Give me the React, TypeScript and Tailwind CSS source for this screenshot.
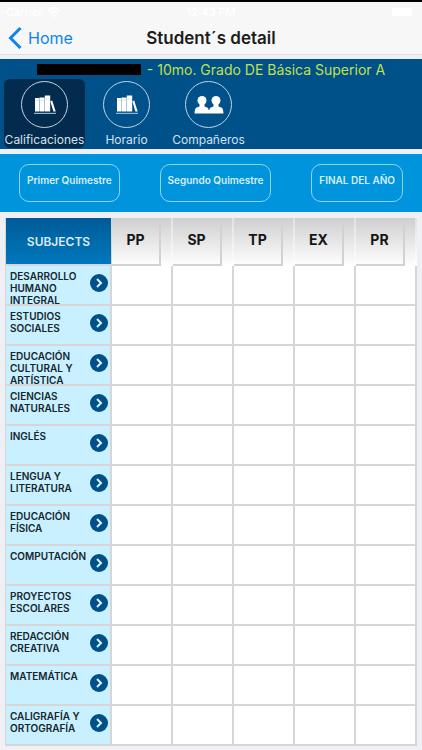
import { useState } from "react";
import type { ReactNode } from "react";
import clsx from "clsx";

const COLUMNS = ["PP", "SP", "TP", "EX", "PR"];

const TERMS = ["Primer Quimestre", "Segundo Quimestre", "FINAL DEL AÑO"];

const SUBJECTS = [
  "DESARROLLO HUMANO INTEGRAL",
  "ESTUDIOS SOCIALES",
  "EDUCACIÓN CULTURAL Y ARTÍSTICA",
  "CIENCIAS NATURALES",
  "INGLÉS",
  "LENGUA Y LITERATURA",
  "EDUCACIÓN FÍSICA",
  "COMPUTACIÓN",
  "PROYECTOS ESCOLARES",
  "REDACCIÓN CREATIVA",
  "MATEMÁTICA",
  "CALIGRAFÍA Y ORTOGRAFÍA",
];

function BooksIcon() {
  return (
    <svg width="24" height="20" viewBox="0 0 24 20" fill="white" aria-hidden="true">
      <path d="M2 3h4.200v13.500H2zM6.500 2.500h5V16.500h-5zM11.800 0.500h5.400v16h-5.400z" />
      <path d="M17.300 6.200l1.900-.6L22.700 16.500h-2.300z" />
      <path d="M2 5.200h9.500M12 4h5" stroke="#b9cbdb" strokeWidth="0.5" />
      <path d="M1 17.800h22v1.200H1z" fill="#8fb4d0" />
    </svg>
  );
}

function PeopleIcon() {
  return (
    <svg width="30" height="20" viewBox="0 0 30 20" fill="white" aria-hidden="true">
      <circle cx="8" cy="5.500" r="4.500" />
      <circle cx="22" cy="5.500" r="4.500" />
      <path d="M5.500 8h5v3.500l2.700.9c1 .4 1.300 1.200 1.400 2.600h.8c.1-1.400.4-2.200 1.400-2.600l2.700-.9V8h5v3.500l2.900 1c1.400.5 1.900 2.500 2.100 6H.5c.2-3.500.7-5.500 2.100-6l2.900-1z" />
    </svg>
  );
}

function StatusBar() {
  return (
    <div className="flex h-[22px] items-center justify-between border-t-2 border-black px-[6px] text-[11px] font-medium text-white">
      <div className="flex flex-1 items-center gap-1">
        <span>Carrier</span>
        <svg width="14" height="10" viewBox="0 0 14 10" fill="none" stroke="white" strokeWidth="2" aria-hidden="true">
          <path d="M1 3.500Q7-1.500 13 3.500M3.500 6Q7 3 10.500 6" />
          <circle cx="7" cy="8.500" r="0.6" />
        </svg>
      </div>
      <span>12:43 PM</span>
      <div className="flex flex-1 justify-end">
        <span className="mr-1 h-2 w-5 rounded-xs bg-white" />
      </div>
    </div>
  );
}

function NavBar() {
  return (
    <header className="border-b border-[#dedee4] bg-[#f7f7f7]">
      <StatusBar />
      <div className="grid h-8 grid-cols-[1fr_auto_1fr] items-center px-2">
        <button className="flex items-center gap-[6px] text-[16px] text-[#0a84f5]">
          <svg width="14" height="22" viewBox="0 0 14 22" fill="none" stroke="currentColor" strokeWidth="3" aria-hidden="true">
            <path d="M12.500 1L2.500 11l10 10" />
          </svg>
          Home
        </button>
        <h1 className="pt-px text-[17px] font-semibold text-[#1c1c1c]">Student´s detail</h1>
      </div>
    </header>
  );
}

function SectionButton({ label, active, onClick, children }: {
  label: string;
  active: boolean;
  onClick: () => void;
  children: ReactNode;
}) {
  return (
    <button
      onClick={onClick}
      className={clsx(
        "flex h-[69px] min-w-[81px] flex-col items-center rounded-md pt-[2px] text-[12px] leading-4 text-[#d3e2ee]",
        active && "bg-[#022b4d]",
      )}
    >
      <span className="mb-1 flex size-[47px] items-center justify-center rounded-full border border-[#c3d4e2]">
        {children}
      </span>
      {label}
    </button>
  );
}

function GradesTable() {
  return (
    <table className="w-full table-fixed border-separate border-spacing-0 border-l border-[#d9d5d7]">
      <thead>
        <tr className="h-12 bg-linear-to-b from-[#cfcfcf] to-white">
          <th scope="col" className="w-[106px] border-r border-b-2 border-[#d9d5d7] bg-linear-to-b from-[#005b98] to-[#0078bd] pt-[2px] text-[12px] font-semibold text-[#dcecf8]">
            SUBJECTS
          </th>
          {COLUMNS.map((col) => (
            <th key={col} scope="col" className="border-r-2 border-white/40 p-0">
              <div className="mr-[10px] flex h-12 items-center justify-center border-r-2 border-b-2 border-[#d3d1d2] pb-1 text-[14px] font-bold text-[#161616]">
                {col}
              </div>
            </th>
          ))}
        </tr>
      </thead>
      <tbody>
        {SUBJECTS.map((subject) => (
          <tr key={subject} className="h-10">
            <th scope="row" className="border-r-2 border-b-2 border-[#d9d5d7] bg-[#c9f0ff] p-0 text-left">
              <div className="flex h-[38px] items-start justify-between pt-1 pr-[2px] pl-1">
                <span className="w-[76px] text-[10px] leading-3 font-semibold text-[#15262e]">{subject}</span>
                <button
                  aria-label={`Open ${subject}`}
                  className="mt-1 flex size-[18px] shrink-0 items-center justify-center rounded-full bg-[#00508a]"
                >
                  <svg width="8" height="10" viewBox="0 0 8 10" fill="none" stroke="#dff2fb" strokeWidth="2" aria-hidden="true">
                    <path d="M2 1l4 4-4 4" />
                  </svg>
                </button>
              </div>
            </th>
            {COLUMNS.map((col) => (
              <td key={col} className="border-r-2 border-b-2 border-[#d9d5d7] bg-white" />
            ))}
          </tr>
        ))}
      </tbody>
    </table>
  );
}

export default function App() {
  const [section, setSection] = useState("Calificaciones");

  return (
    <div className="min-h-screen bg-[#efeff6] font-['Inter','Liberation_Sans',sans-serif]">
      <NavBar />

      {/* student and sections */}
      <section className="mt-1 bg-[#00508a] px-1 pb-px">
        <div className="flex h-5 items-center justify-center gap-[6px]">
          <span className="h-[11px] w-[104px] bg-black" />
          <p className="text-[14px] text-[#c2e04a]">- 10mo. Grado DE Básica Superior A</p>
        </div>
        <nav className="flex gap-px">
          <SectionButton label="Calificaciones" active={section === "Calificaciones"} onClick={() => setSection("Calificaciones")}>
            <BooksIcon />
          </SectionButton>
          <SectionButton label="Horario" active={section === "Horario"} onClick={() => setSection("Horario")}>
            <BooksIcon />
          </SectionButton>
          <SectionButton label="Compañeros" active={section === "Compañeros"} onClick={() => setSection("Compañeros")}>
            <PeopleIcon />
          </SectionButton>
        </nav>
      </section>

      {/* terms */}
      <section className="mt-[5px] flex h-[58px] items-center justify-between bg-[#0094dc] px-[19px]">
        {TERMS.map((term) => (
          <button key={term} className="h-[38px] rounded-[10px] border border-[#8fd3f5] px-[7px] pb-[6px] text-[10px] font-semibold text-[#d5effc]">
            {term}
          </button>
        ))}
      </section>

      <main className="px-[5px] pt-[6px] pb-1">
        <GradesTable />
      </main>
    </div>
  );
}
